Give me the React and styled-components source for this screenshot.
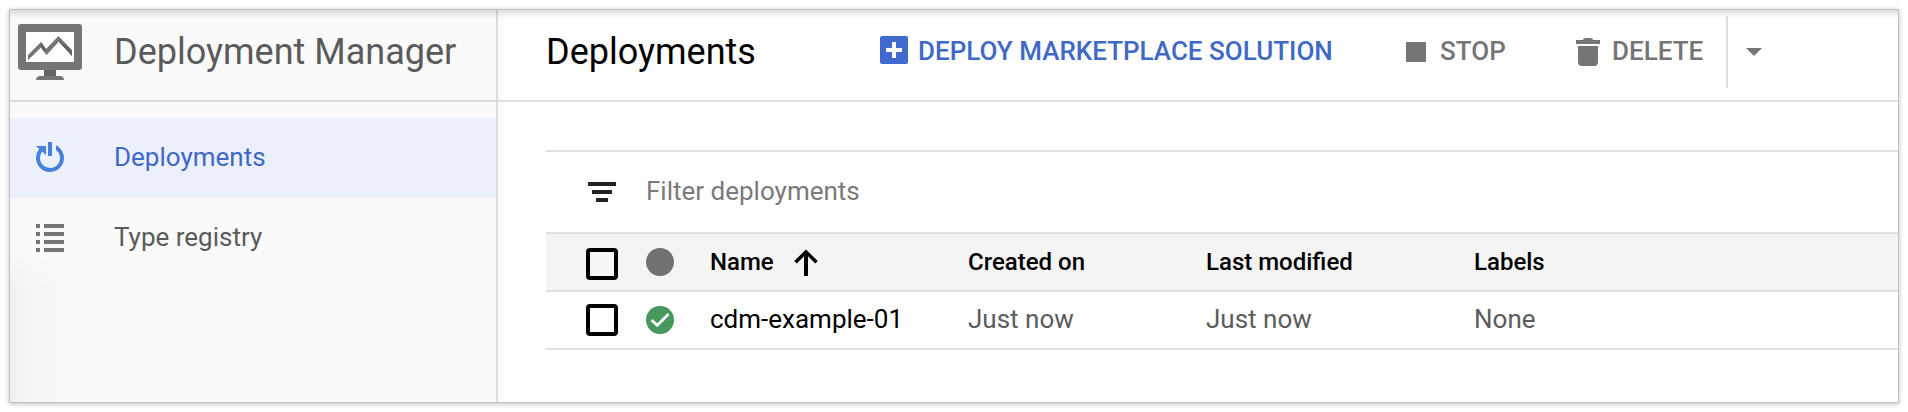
import React from "react";
import styled, { createGlobalStyle } from "styled-components";

const GlobalStyle = createGlobalStyle`
  * { box-sizing: border-box; }
  html, body { margin: 0; background: #fff; }
  body { font-family: Roboto, "Liberation Sans", sans-serif; font-size: 26px; color: #000; }
  svg { display: block; flex: none; }
`;

const Page = styled.div`
  width: 1908px;
  height: 412px;
  padding: 10px;
  overflow: hidden;
`;

const Window = styled.div`
  position: relative;
  display: flex;
  width: 1888px;
  height: 392px;
  background: #fff;
  box-shadow: 0 0 0 1px #c2c2c2, 0 1px 5px 1px rgba(0, 0, 0, 0.25);
`;

const TopShade = styled.div`
  position: absolute;
  inset: 0 0 auto 0;
  height: 10px;
  background: linear-gradient(rgba(0, 0, 0, 0.13), rgba(0, 0, 0, 0.03) 60%, transparent);
  pointer-events: none;
`;

const Sidebar = styled.aside`
  display: flex;
  flex-direction: column;
  width: 488px;
  background: #fafafa;
  border-right: 2px solid #dcdcdc;
`;

const Brand = styled.div`
  display: flex;
  align-items: center;
  height: 92px;
  padding: 0 0 6px 8px;
  gap: 32px;
  border-bottom: 2px solid #dcdcdc;
`;

const Title = styled.h1`
  margin: 0;
  font-size: 36px;
  line-height: 42px;
  font-weight: 400;
  color: ${(p) => p.$color || "#000"};
  white-space: nowrap;
`;

const Nav = styled.nav`
  display: flex;
  flex-direction: column;
  flex: 1;
  padding-top: 16px;
`;

const NavItem = styled.a`
  display: flex;
  align-items: center;
  height: 80px;
  padding-left: 26px;
  gap: 50px;
  color: ${(p) => (p.$active ? "#3f69c6" : "#5a5a5a")};
  background: ${(p) => (p.$active ? "#ebf0fa" : "transparent")};
`;

const NavLabel = styled.span`
  padding-bottom: 2px;
  line-height: 30px;
`;

const NavShade = styled.div`
  flex: 1;
  width: 64px;
  margin-top: -26px;
  background: linear-gradient(90deg, rgba(0, 0, 0, 0.045), rgba(0, 0, 0, 0.015) 35%, transparent);
  mask-image: linear-gradient(transparent, #000 40px);
`;

const Main = styled.main`
  flex: 1;
  min-width: 0;
`;

const Toolbar = styled.header`
  display: flex;
  align-items: center;
  height: 92px;
  padding: 0 0 6px 48px;
  border-bottom: 2px solid #e0e0e0;
`;

const TitleSlot = styled.div`
  width: 334px;
`;

const Action = styled.button`
  display: flex;
  align-items: center;
  width: ${(p) => p.$width}px;
  gap: ${(p) => p.$gap}px;
  margin: 0;
  padding: 0 0 2px;
  border: 0;
  background: none;
  font: 500 26px/30px Roboto, "Liberation Sans", sans-serif;
  color: ${(p) => p.$color || "#757575"};
  white-space: nowrap;

  svg {
    margin-bottom: 2px;
  }
`;

const Separator = styled.div`
  width: 2px;
  height: 72px;
  margin-right: 18px;
  background: #e0e0e0;
`;

const Content = styled.section`
  padding: 48px 0 0 48px;
`;

const FilterBar = styled.div`
  display: flex;
  align-items: center;
  height: 82px;
  padding-left: 42px;
  gap: 30px;
  border-top: 2px solid #e0e0e0;
  color: #7a7a7a;
`;

const FilterText = styled.span`
  padding-bottom: 2px;
  line-height: 30px;
`;

const Row = styled.div`
  display: grid;
  grid-template-columns: 60px 64px 258px 238px 268px 1fr;
  align-items: center;
  height: 58px;
  padding-left: 40px;
  border-top: 2px solid #e0e0e0;
  background: ${(p) => (p.$head ? "#f4f4f4" : "#fff")};
  font-size: ${(p) => (p.$head ? 24 : 26)}px;
  font-weight: ${(p) => (p.$head ? 500 : 400)};
`;

const Table = styled.div`
  border-bottom: 2px solid #e0e0e0;
`;

const Cell = styled.div`
  display: flex;
  align-items: center;
  gap: 20px;
  line-height: 30px;
  padding-bottom: ${(p) => (p.$head ? 0 : 2)}px;
  color: ${(p) => (p.$muted ? "#5c5c5c" : "#000")};
`;

const Checkbox = styled.div`
  width: 32px;
  height: 32px;
  margin-top: ${(p) => (p.$head ? 4 : 0)}px;
  border: 4px solid #000;
  border-radius: 4px;
  background: ${(p) => (p.$head ? "#f6f6f6" : "#fff")};
`;

const Dot = styled.div`
  width: 28px;
  height: 28px;
  border-radius: 50%;
  background: #717171;
`;

const MonitorIcon = () => (
  <svg width="64" height="56" viewBox="0 0 64 56">
    <rect width="64" height="46" rx="3" fill="#757575" />
    <rect x="8" y="8" width="48" height="30" fill="#fff" />
    <path d="M10 31 23 18 28 25 40.5 12 54 26V32L41 17.5 28.5 31 23 23.5 10 36Z" fill="#757575" />
    <path d="M23 18 28 25 26.5 28 23 23.5ZM40.5 16 54 27V32L41 18Z" fill="#606060" />
    <path d="M26 46H38V52H26Z" fill="#646464" />
    <path d="M18 56C18 53 20 52 22 52H42C44 52 46 53 46 56Z" fill="#757575" />
  </svg>
);

const DeployIcon = () => (
  <svg width="28" height="32" viewBox="0 0 28 32" fill="#4a80dd">
    <path d="M20 3.35A14 14 0 1 1 4.5 5.7L7.2 8.7A10 10 0 1 0 20 8Z" />
    <path d="M0 4H10V13Z" />
    <path d="M12 0H16V14H12Z" />
  </svg>
);

const ListIcon = () => (
  <svg width="28" height="28" viewBox="0 0 28 28" fill="#757575">
    {[0, 8, 16, 24].map((y) => (
      <path key={y} d={`M0 ${y}h4v4h-4zM8 ${y}h20v4h-20z`} />
    ))}
  </svg>
);

const AddIcon = () => (
  <svg width="28" height="28" viewBox="0 0 28 28">
    <rect width="28" height="28" rx="2" fill="#3f69cf" />
    <path d="M12 6h4v6h6v4h-6v6h-4v-6h-6v-4h6z" fill="#fff" />
  </svg>
);

const StopIcon = () => (
  <svg width="20" height="24" viewBox="0 0 20 24">
    <path d="M0 4h20v20H0z" fill="#757575" />
  </svg>
);

const TrashIcon = () => (
  <svg width="24" height="32" viewBox="0 0 24 32" fill="#757575">
    <path d="M0 6h7q0-2 3-2h4q3 0 3 2h7v4H0zM2 12h20v16q0 4-4 4H6q-4 0-4-4z" />
  </svg>
);

const CaretIcon = () => (
  <svg width="16" height="8" viewBox="0 0 16 8">
    <path d="M0 0h16L8 8z" fill="#757575" />
  </svg>
);

const FilterIcon = () => (
  <svg width="28" height="20" viewBox="0 0 28 20">
    <path d="M0 0h28v4H0zM4 8h20v4H4zM8 16h12v4H8z" fill="#212121" />
  </svg>
);

const SortIcon = () => (
  <svg width="24" height="27" viewBox="0 0 24 27" fill="none" stroke="#000">
    <path d="M12 27V3" strokeWidth="4" />
    <path d="M1.5 13.3 12 2.8 22.5 13.3" strokeWidth="3.4" />
  </svg>
);

const SuccessIcon = () => (
  <svg width="28" height="28" viewBox="0 0 28 28">
    <circle cx="14" cy="14" r="14" fill="#47985d" />
    <path d="M5.5 14 11.3 19.3 22.5 8" fill="none" stroke="#fff" strokeWidth="2.8" />
  </svg>
);

const CaretButton = styled.button`
  display: flex;
  margin: 0;
  padding: 0;
  border: 0;
  background: none;
`;

const deployments = [
  { name: "cdm-example-01", created: "Just now", modified: "Just now", labels: "None" },
];

export default function App() {
  return (
    <Page>
      <GlobalStyle />
      <Window>
        <Sidebar>
          <Brand>
            <MonitorIcon />
            <Title $color="#5a5a5a">Deployment Manager</Title>
          </Brand>
          <Nav>
            <NavItem $active>
              <DeployIcon />
              <NavLabel>Deployments</NavLabel>
            </NavItem>
            <NavItem>
              <ListIcon />
              <NavLabel>Type registry</NavLabel>
            </NavItem>
            <NavShade />
          </Nav>
        </Sidebar>
        <Main>
          <Toolbar>
            <TitleSlot>
              <Title>Deployments</Title>
            </TitleSlot>
            <Action $width={526} $gap={10} $color="#3f69c6">
              <AddIcon />
              DEPLOY MARKETPLACE SOLUTION
            </Action>
            <Action $width={170} $gap={14}>
              <StopIcon />
              STOP
            </Action>
            <Action $width={150} $gap={12}>
              <TrashIcon />
              DELETE
            </Action>
            <Separator />
            <CaretButton aria-label="More actions">
              <CaretIcon />
            </CaretButton>
          </Toolbar>
          <Content>
            <FilterBar>
              <FilterIcon />
              <FilterText>Filter deployments</FilterText>
            </FilterBar>
            <Table>
              <Row $head>
                <Checkbox $head />
                <Dot />
                <Cell $head>
                  Name
                  <SortIcon />
                </Cell>
                <Cell $head>Created on</Cell>
                <Cell $head>Last modified</Cell>
                <Cell $head>Labels</Cell>
              </Row>
              {deployments.map((d) => (
                <Row key={d.name}>
                  <Checkbox />
                  <SuccessIcon />
                  <Cell>{d.name}</Cell>
                  <Cell $muted>{d.created}</Cell>
                  <Cell $muted>{d.modified}</Cell>
                  <Cell $muted>{d.labels}</Cell>
                </Row>
              ))}
            </Table>
          </Content>
        </Main>
        <TopShade />
      </Window>
    </Page>
  );
}
